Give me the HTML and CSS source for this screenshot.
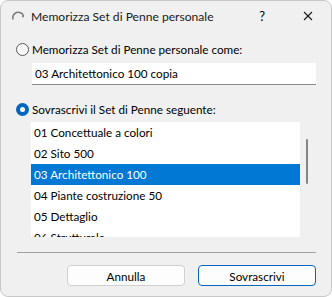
FILE: index.html
```html
<!DOCTYPE html>
<html lang="it">
<head>
  <meta charset="UTF-8">
  <title>Memorizza Set di Penne personale</title>
  <link rel="stylesheet" href="styles.css">
</head>
<body>
  <div class="window">
    <div class="titlebar">
      <svg class="app-icon" width="14" height="12" viewBox="0 0 14 12">
        <path d="M2 10.5 A5.5 5.5 0 0 1 12.5 7" fill="none" stroke="#7a7a7a" stroke-width="1.6"/>
        <path d="M11 7.5 L12.8 7.5" stroke="#7a7a7a" stroke-width="1.4"/>
      </svg>
      <span class="title">Memorizza Set di Penne personale</span>
      <div class="caption-buttons">
        <span class="help">?</span>
        <svg class="close-icon" width="10" height="10" viewBox="0 0 10 10">
          <line x1="1" y1="1" x2="9" y2="9" stroke="#1a1a1a" stroke-width="1.1"/>
          <line x1="9" y1="1" x2="1" y2="9" stroke="#1a1a1a" stroke-width="1.1"/>
        </svg>
      </div>
    </div>

    <div class="content">
      <label class="radio-row">
        <span class="radio"></span>
        <span>Memorizza Set di Penne personale come:</span>
      </label>
      <div class="textfield">03 Architettonico 100 copia</div>

      <label class="radio-row second">
        <span class="radio checked"></span>
        <span>Sovrascrivi il Set di Penne seguente:</span>
      </label>

      <div class="list-wrap">
        <ul class="list">
          <li>01 Concettuale a colori</li>
          <li>02 Sito 500</li>
          <li class="selected">03 Architettonico 100</li>
          <li>04 Piante costruzione 50</li>
          <li>05 Dettaglio</li>
          <li>06 Strutturale</li>
        </ul>
        <div class="scrollbar"><div class="thumb"></div></div>
      </div>

      <hr class="separator">

      <div class="buttons">
        <button class="btn">Annulla</button>
        <button class="btn default">Sovrascrivi</button>
      </div>
    </div>
  </div>
</body>
</html>
```

FILE: styles.css
```css
body {
  margin: 0;
  background: #ffffff;
  font-family: "Segoe UI", Lato, sans-serif;
  font-size: 11.7px;
  color: #000;
}

.window {
  width: 332px;
  height: 297px;
  box-sizing: border-box;
  border: 1px solid #c8c8c8;
  border-radius: 8px;
  background: #f0f0f0;
  overflow: hidden;
}

.titlebar {
  height: 30px;
  display: flex;
  align-items: center;
  padding-left: 10px;
}

.app-icon {
  flex: none;
  margin-top: -2px;
}

.title {
  margin-left: 6px;
  font-size: 12.1px;
  color: #1a1a1a;
}

.caption-buttons {
  margin-left: auto;
  display: flex;
  align-items: center;
  gap: 38px;
  padding-right: 18px;
}

.help {
  font-size: 13px;
}

.close-icon {
  display: block;
  flex: none;
  width: 10px;
  height: 10px;
}

.content {
  padding: 0 15px 0 15px;
}

.radio-row {
  display: flex;
  align-items: center;
  gap: 3px;
  height: 16px;
  margin-top: 10px;
}

.radio-row.second {
  margin-top: 16px;
}

.radio {
  width: 11px;
  height: 11px;
  border: 1px solid #5a5a5a;
  border-radius: 50%;
  background: #f8f8f8;
  box-sizing: content-box;
}

.radio.checked {
  border: 4px solid #0067c0;
  width: 5px;
  height: 5px;
  background: #fff;
}

.textfield {
  margin: 6px 0 0 16px;
  height: 21px;
  line-height: 21px;
  background: #fff;
  border-bottom: 1px solid #8a8a8a;
  padding-left: 3px;
}

.list-wrap {
  display: flex;
  margin: 5px 0 0 15px;
  height: 115px;
}

.list {
  list-style: none;
  margin: 0;
  padding: 0;
  width: 269px;
  height: 115px;
  overflow: hidden;
  background: #fff;
}

.list li {
  height: 21px;
  line-height: 21px;
  padding-left: 3px;
}

.list li.selected {
  background: #0078d4;
  color: #fff;
}

.scrollbar {
  flex: 1;
  position: relative;
}

.thumb {
  position: absolute;
  left: 6px;
  top: 17px;
  width: 2px;
  height: 45px;
  background: #858585;
  border-radius: 1px;
}

.separator {
  margin: 15px 0 0 1px;
  border: none;
  border-top: 1px solid #a0a0a0;
  height: 0;
}

.buttons {
  display: flex;
  justify-content: flex-end;
  gap: 13px;
  margin-top: 12px;
}

.btn {
  width: 118px;
  height: 21px;
  font-family: inherit;
  font-size: 11.7px;
  background: #fdfdfd;
  border: 1px solid #d0d0d0;
  border-radius: 4px;
  color: #000;
  padding: 0;
}

.btn.default {
  border-color: #0067c0;
}
```
